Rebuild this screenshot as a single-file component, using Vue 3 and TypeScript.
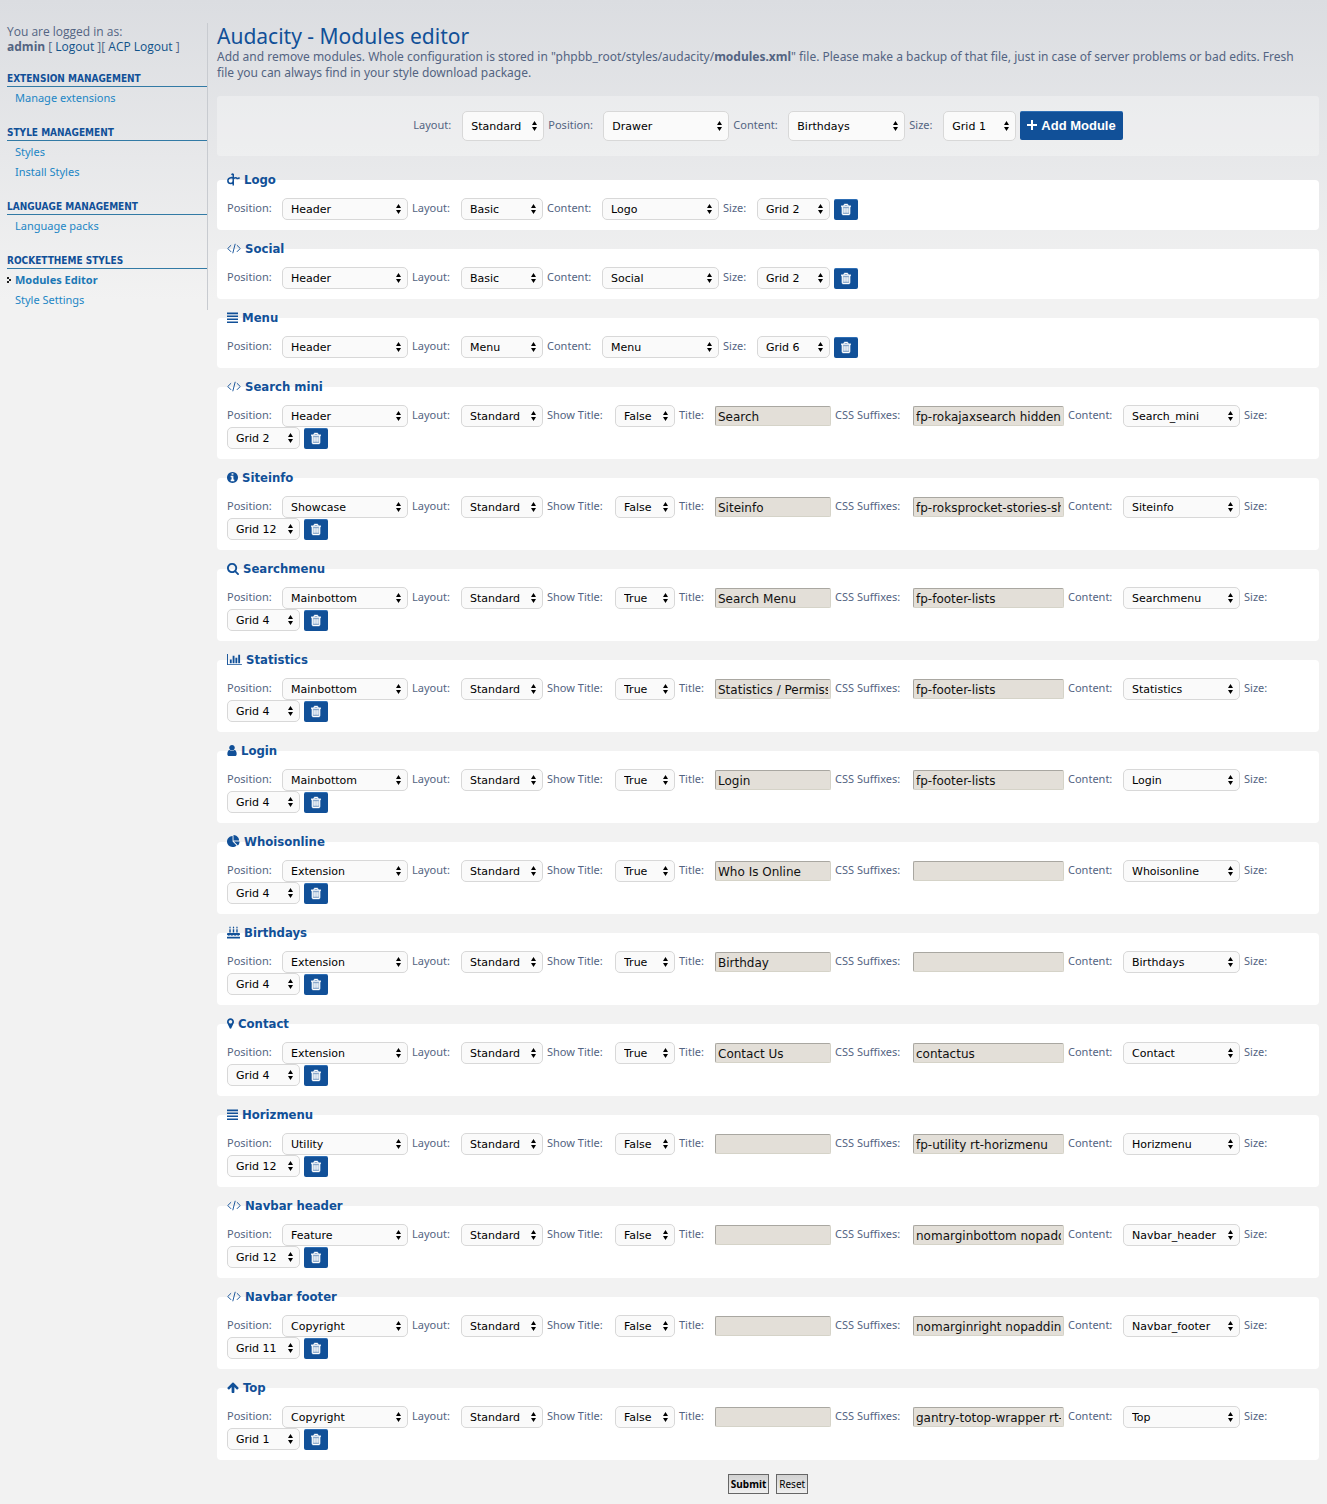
<script setup lang="ts">
interface MenuLink { label: string; active?: boolean }
interface MenuGroup { title: string; links: MenuLink[] }
interface Field {
  key: string
  label: string
  kind: 'select' | 'text'
  value: string
}
interface Glyph { w: number; box: number; d: string; line?: number }
interface Module { name: string; icon: string; fields: Field[] }

const menu: MenuGroup[] = [
  { title: 'Extension management', links: [{ label: 'Manage extensions' }] },
  { title: 'Style management', links: [{ label: 'Styles' }, { label: 'Install Styles' }] },
  { title: 'Language management', links: [{ label: 'Language packs' }] },
  { title: 'RocketTheme styles', links: [{ label: 'Modules Editor', active: true }, { label: 'Style Settings' }] },
]

const select = (key: string, label: string, value: string): Field => ({ key, label, kind: 'select', value })
const text = (key: string, label: string, value: string): Field => ({ key, label, kind: 'text', value })

const newModule: Field[] = [
  select('layout', 'Layout', 'Standard'),
  select('position', 'Position', 'Drawer'),
  select('content', 'Content', 'Birthdays'),
  select('size', 'Size', 'Grid 1'),
]

const short = (name: string, icon: string, layout: string, content: string, size: string): Module => ({
  name,
  icon,
  fields: [
    select('position', 'Position', 'Header'),
    select('layout', 'Layout', layout),
    select('content', 'Content', content),
    select('size', 'Size', size),
  ],
})

const full = (
  name: string, icon: string, position: string, show: string,
  title: string, css: string, content: string, size: string,
): Module => ({
  name,
  icon,
  fields: [
    select('position', 'Position', position),
    select('layout', 'Layout', 'Standard'),
    select('show', 'Show Title', show),
    text('title', 'Title', title),
    text('css', 'CSS Suffixes', css),
    select('content', 'Content', content),
    select('size', 'Size', size),
  ],
})

const modules: Module[] = [
  short('Logo', 'logo', 'Basic', 'Logo', 'Grid 2'),
  short('Social', 'code', 'Basic', 'Social', 'Grid 2'),
  short('Menu', 'bars', 'Menu', 'Menu', 'Grid 6'),
  full('Search mini', 'code', 'Header', 'False', 'Search', 'fp-rokajaxsearch hidden-phone', 'Search_mini', 'Grid 2'),
  full('Siteinfo', 'info', 'Showcase', 'False', 'Siteinfo', 'fp-roksprocket-stories-showcase', 'Siteinfo', 'Grid 12'),
  full('Searchmenu', 'search', 'Mainbottom', 'True', 'Search Menu', 'fp-footer-lists', 'Searchmenu', 'Grid 4'),
  full('Statistics', 'chart', 'Mainbottom', 'True', 'Statistics / Permissions', 'fp-footer-lists', 'Statistics', 'Grid 4'),
  full('Login', 'user', 'Mainbottom', 'True', 'Login', 'fp-footer-lists', 'Login', 'Grid 4'),
  full('Whoisonline', 'pie', 'Extension', 'True', 'Who Is Online', '', 'Whoisonline', 'Grid 4'),
  full('Birthdays', 'cake', 'Extension', 'True', 'Birthday', '', 'Birthdays', 'Grid 4'),
  full('Contact', 'marker', 'Extension', 'True', 'Contact Us', 'contactus', 'Contact', 'Grid 4'),
  full('Horizmenu', 'bars', 'Utility', 'False', '', 'fp-utility rt-horizmenu', 'Horizmenu', 'Grid 12'),
  full('Navbar header', 'code', 'Feature', 'False', '', 'nomarginbottom nopaddingbottom', 'Navbar_header', 'Grid 12'),
  full('Navbar footer', 'code', 'Copyright', 'False', '', 'nomarginright nopaddingright', 'Navbar_footer', 'Grid 11'),
  full('Top', 'arrow', 'Copyright', 'False', '', 'gantry-totop-wrapper rt-totop', 'Top', 'Grid 1'),
]

const glyphs: Record<string, Glyph> = {
  logo: { w: 13, box: 1792, line: 210, d: 'M860 700Q700 620 520 640Q120 700 120 1080Q140 1440 520 1440Q840 1440 860 1100V140M860 1100V1720M620 240Q760 100 860 160M860 760Q1240 560 1400 760Q1560 800 1740 640' },
  code: { w: 14, box: 1920, line: 130, d: 'M560 440L100 900L560 1360M1360 440L1820 900L1360 1360M1130 250L790 1550' },
  bars: { w: 11, box: 1536, d: 'M0 207h1536v220H0zM0 621h1536v220H0zM0 1035h1536v220H0zM0 1449h1536v220H0z' },
  info: { w: 11, box: 1536, d: 'M1024 1376v-160q0-14-9-23t-23-9h-96v-512q0-14-9-23t-23-9h-320q-14 0-23 9t-9 23v160q0 14 9 23t23 9h96v320h-96q-14 0-23 9t-9 23v160q0 14 9 23t23 9h448q14 0 23-9t9-23zm-128-896v-160q0-14-9-23t-23-9h-192q-14 0-23 9t-9 23v160q0 14 9 23t23 9h192q14 0 23-9t9-23zm640 416q0 209-103 385.5t-279.5 279.5-385.5 103-385.5-103-279.5-279.5-103-385.5 103-385.5 279.5-279.5 385.5-103 385.5 103 279.5 279.5 103 385.5z' },
  search: { w: 12, box: 1664, d: 'M1152 832q0-185-131.5-316.5t-316.5-131.5-316.5 131.5-131.5 316.5 131.5 316.5 316.5 131.5 316.5-131.5 131.5-316.5zm512 832q0 52-38 90t-90 38q-54 0-90-38l-343-342q-179 124-399 124-143 0-273.5-55.5t-225-150-150-225-55.5-273.5 55.5-273.5 150-225 225-150 273.5-55.5 273.5 55.5 225 150 150 225 55.5 273.5q0 220-124 399l343 343q37 37 37 90z' },
  chart: { w: 15, box: 2048, d: 'M640 896v512h-256v-512h256zm384-512v1024h-256v-1024h256zm1024 1152v128h-2048v-1536h128v1408h1920zm-640-896v768h-256v-768h256zm384-384v1152h-256v-1152h256z' },
  user: { w: 10, box: 1280, d: 'M1280 1399q0 109-62.5 187t-150.5 78h-854q-88 0-150.5-78t-62.5-187q0-85 8.5-160.5t31.5-152 58.5-131 94-89 134.5-34.5q131 128 313 128t313-128q76 0 134.5 34.5t94 89 58.5 131 31.5 152 8.5 160.5zm-256-887q0 159-112.5 271.5t-271.5 112.5-271.5-112.5-112.5-271.5 112.5-271.5 271.5-112.5 271.5 112.5 112.5 271.5z' },
  pie: { w: 13, box: 1792, d: 'M768 890l546 546q-106 108-247.5 168t-298.5 60q-209 0-385.5-103t-279.5-279.5-103-385.5 103-385.5 279.5-279.5 385.5-103v762zm187 6h773q0 157-60 298.5t-168 247.5zm709-128h-768v-768q209 0 385.5 103t279.5 279.5 103 385.5z' },
  cake: { w: 13, box: 1792, d: 'M0 1472h1792v256H0zM128 960h1536q128 20 128 150v110q-110 110-224 110t-224-100q-110 100-224 100t-224-100q-110 100-224 100t-224-100q-110 100-224 100T0 1220v-110q0-130 128-150zM320 448h192v448H320zM800 448h192v448H800zM1280 448h192v448h-192zM416 40q100 140 100 210a100 100 0 0 1-200 0q0-70 100-210zM896 40q100 140 100 210a100 100 0 0 1-200 0q0-70 100-210zM1376 40q100 140 100 210a100 100 0 0 1-200 0q0-70 100-210z' },
  marker: { w: 7, box: 1024, d: 'M768 640q0-106-75-181t-181-75-181 75-75 181 75 181 181 75 181-75 75-181zm256 0q0 109-33 179l-364 774q-16 33-47.5 52t-67.5 19-67.5-19-46.5-52l-365-774q-33-70-33-179 0-212 150-362t362-150 362 150 150 362z' },
  arrow: { w: 12, box: 1664, d: 'M1611 971q0 51-37 90l-75 75q-38 38-91 38-54 0-90-38l-294-293v704q0 52-37.5 84.5t-90.5 32.5h-128q-53 0-90.5-32.5t-37.5-84.5v-704l-294 293q-36 38-90 38t-90-38l-75-75q-38-38-38-90 0-53 38-91l651-651q35-37 90-37 54 0 91 37l651 651q37 39 37 91z' },
}
</script>

<template>
  <div class="page">
    <aside class="sidebar">
      <p class="session">
        You are logged in as:<br>
        <strong>admin</strong> [ <a href="#">Logout</a> ][ <a href="#">ACP Logout</a> ]
      </p>
      <nav>
        <section v-for="group in menu" :key="group.title" class="group">
          <h2>{{ group.title }}</h2>
          <ul>
            <li v-for="link in group.links" :key="link.label" :class="{ active: link.active }">
              <svg v-if="link.active" class="pointer" viewBox="0 0 4 6" aria-hidden="true">
                <path d="M0 0h2v2H0zM2 2h2v2H2zM0 4h2v2H0z" />
              </svg>
              <a href="#">{{ link.label }}</a>
            </li>
          </ul>
        </section>
      </nav>
    </aside>

    <main class="main">
      <h1>Audacity - Modules editor</h1>
      <p class="intro">
        Add and remove modules. Whole configuration is stored in "phpbb_root/styles/audacity/<strong>modules.xml</strong>" file.
        Please make a backup of that file, just in case of server problems or bad edits. Fresh file you can always find in your style download package.
      </p>

      <form @submit.prevent>
        <div class="adder">
          <template v-for="f in newModule" :key="f.key">
            <label :class="'l-' + f.key" :for="'new-' + f.key">{{ f.label }}:</label>
            <select :id="'new-' + f.key" :class="'f-' + f.key"><option>{{ f.value }}</option></select>
          </template>
          <button type="button" class="add">
            <svg viewBox="0 0 10 10" aria-hidden="true"><path d="M4 0h2v4h4v2H6v4H4V6H0V4h4z" /></svg>
            Add Module
          </button>
        </div>

        <fieldset v-for="(m, i) in modules" :key="m.name">
          <legend>
            <svg
              :style="{ width: glyphs[m.icon].w + 'px' }"
              :viewBox="`0 0 ${glyphs[m.icon].box} 1792`"
              :class="{ outline: glyphs[m.icon].line }"
              aria-hidden="true"
            ><path :d="glyphs[m.icon].d" :stroke-width="glyphs[m.icon].line" /></svg>
            <span>{{ m.name }}</span>
          </legend>
          <div class="fields">
            <template v-for="f in m.fields" :key="f.key">
              <label :class="'l-' + f.key" :for="`m${i}-${f.key}`">{{ f.label }}:</label>
              <select v-if="f.kind === 'select'" :id="`m${i}-${f.key}`" :class="'f-' + f.key"><option>{{ f.value }}</option></select>
              <input v-else :id="`m${i}-${f.key}`" type="text" :class="'f-' + f.key" :value="f.value">
            </template>
            <button type="button" class="trash" :aria-label="'Delete ' + m.name">
              <svg viewBox="0 0 1408 1792" aria-hidden="true">
                <path class="can" d="M192 512h1024v1024H192z" />
                <path d="M512 736v576q0 14-9 23t-23 9h-64q-14 0-23-9t-9-23v-576q0-14 9-23t23-9h64q14 0 23 9t9 23zm256 0v576q0 14-9 23t-23 9h-64q-14 0-23-9t-9-23v-576q0-14 9-23t23-9h64q14 0 23 9t9 23zm256 0v576q0 14-9 23t-23 9h-64q-14 0-23-9t-9-23v-576q0-14 9-23t23-9h64q14 0 23 9t9 23zm128 724v-948h-896v948q0 22 7 40.5t14.5 27 10.5 8.5h832q3 0 10.5-8.5t14.5-27 7-40.5zm-672-1076h448l-48-117q-7-9-17-11h-317q-10 2-17 11zm928 32v64q0 14-9 23t-23 9h-96v948q0 83-47 143.5t-113 60.5h-832q-66 0-113-58.5t-47-141.5v-952h-96q-14 0-23-9t-9-23v-64q0-14 9-23t23-9h309l70-167q15-37 54-63t79-26h320q40 0 79 26t54 63l70 167h309q14 0 23 9t9 23z" />
              </svg>
            </button>
          </div>
        </fieldset>

        <div class="actions">
          <button type="submit" class="submit">Submit</button>
          <button type="reset">Reset</button>
        </div>
      </form>
    </main>
  </div>
</template>

<style>
body {
  margin: 0;
  background: #f2f2f2 linear-gradient(#dbdde1, #f2f2f2) 0 0 / 100% 300px no-repeat;
}
</style>

<style scoped>
.page {
  display: flex;
  align-items: flex-start;
  padding: 23px 8px 10px 7px;
  color: #536482;
  font-family: "Noto Sans", "Open Sans", sans-serif;
  font-size: 12px;
}
h1, h2, p, ul { margin: 0; padding: 0; }
a { color: #105289; text-decoration: none; }

.sidebar {
  flex: 0 0 200px;
  border-right: 1px solid #c8cbd0;
}
.session {
  padding-top: 1px;
  font-family: "Open Sans", "Noto Sans", sans-serif;
  line-height: 15px;
}
.group { margin-top: 16px; }
.group h2 {
  height: 16px;
  margin-bottom: 1px;
  border-bottom: 1px solid #327aa5;
  color: #115098;
  font: bold 10px/17px "DejaVu Sans Condensed", "DejaVu Sans", sans-serif;
  text-transform: uppercase;
}
.group li {
  position: relative;
  padding-left: 8px;
  list-style: none;
  font-size: 11px;
  line-height: 20px;
}
.group li a { color: #1c86c5; }
.group .active a { color: #1b78b5; font-weight: bold; }
.pointer { position: absolute; left: 0; top: 7px; width: 4px; height: 6px; fill: #222; }

.main { flex: 1; min-width: 0; margin-left: 9px; }
h1 {
  color: #115098;
  font-size: 21px;
  font-weight: normal;
  line-height: 26px;
}
.intro { padding-right: 8px; line-height: 16px; }

.adder, .fields { display: flex; flex-wrap: wrap; align-items: center; }
.adder {
  justify-content: center;
  margin: 15px 0;
  padding: 15px 0;
  border-radius: 3px;
  background: rgba(255, 255, 255, 0.3);
}
label {
  padding-bottom: 2px;
  font-size: 11px;
  line-height: 18px;
  white-space: nowrap;
}
.l-position, .l-content { width: 55px; }
.l-layout { width: 49px; }
.l-size { width: 34px; }
.l-show { width: 68px; }
.l-title { width: 36px; }
.l-css { width: 78px; }
.f-position { width: 126px; }
.f-layout { width: 82px; }
.f-content { width: 117px; }
.f-size { width: 73px; }
.f-show { width: 60px; }
.f-title { width: 116px; }
.f-css { width: 151px; }

select, input, button { box-sizing: border-box; }
select {
  height: 22px;
  margin: 0 4px 0 0;
  padding: 0 0 0 8px;
  border: 1px solid #d8d8d8;
  border-radius: 5px;
  background: #fafafa url("data:image/svg+xml,%3Csvg xmlns='http://www.w3.org/2000/svg' width='5' height='10'%3E%3Cpath d='M2.500 0L5 4H0zM2.500 10L0 6h5z'/%3E%3C/svg%3E") right 6px center no-repeat;
  color: #000;
  font: 11px "DejaVu Sans", Verdana, sans-serif;
  appearance: none;
}
.adder select { height: 30px; }
input {
  height: 20px;
  margin: 0 4px 0 0;
  padding: 3px 2px 1px;
  border: 1px solid #d5d3c8;
  border-top-color: #a9a7a1;
  border-left-color: #a9a7a1;
  border-radius: 2px;
  background: #e3dfd8;
  color: #111;
  font: 12px "DejaVu Sans", Verdana, sans-serif;
}
.add, .trash {
  display: flex;
  align-items: center;
  justify-content: center;
  border: 0;
  border-top: 1px solid #2f6fb5;
  border-radius: 2px;
  background: #115098;
  color: #fff;
}
.add {
  gap: 4px;
  align-self: flex-start;
  height: 29px;
  padding: 0 7px 2px;
  font: bold 13px "Liberation Sans", Arial, sans-serif;
}
.add svg { width: 10px; height: 10px; fill: #fff; }
.trash { width: 24px; height: 21px; padding: 0; }
.trash svg { width: 10px; height: 13px; fill: #fff; stroke: #fff; stroke-width: 60px; }
.trash .can { fill-opacity: 0.4; stroke: none; }

fieldset {
  min-width: 0;
  margin: 0 0 10px;
  padding: 9px 10px 10px;
  border: 0;
  border-radius: 4px;
  background: #fff;
}
legend {
  display: flex;
  align-items: flex-start;
  gap: 4px;
  height: 18px;
  padding: 0;
  color: #115098;
  font: bold 13px/17px "DejaVu Sans Condensed", "DejaVu Sans", sans-serif;
}
legend svg { height: 13px; margin-top: 2px; fill: #115098; overflow: visible; }
legend .outline { fill: none; stroke: #115098; }

.actions { display: flex; justify-content: center; gap: 7px; padding-top: 4px; }
.actions button {
  height: 20px;
  padding: 0 2px;
  border: 1px solid #666;
  background: linear-gradient(#d2d2d2, #efefef);
  color: #000;
  font: 10px "Noto Sans", "Open Sans", sans-serif;
}
.actions .submit { font-weight: bold; }
</style>
